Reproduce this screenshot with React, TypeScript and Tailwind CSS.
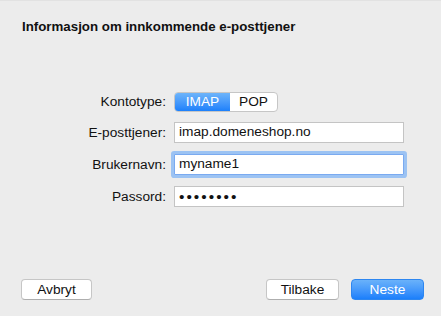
import React from "react";

const font = { fontFamily: '"Liberation Sans", Arial, Helvetica, sans-serif' };

function Row({ label, children }: { label: string; children: React.ReactNode }) {
  return (
    <div className="flex items-center">
      <div className="w-[166px] text-right text-[13.7px] text-[#111] leading-none">{label}</div>
      <div className="ml-[8px]">{children}</div>
    </div>
  );
}

function Input({ value, focused, dots }: { value: string; focused?: boolean; dots?: boolean }) {
  return (
    <div
      className={
        "w-[230px] h-[21px] bg-white border flex items-center pl-[4px] text-[#111] " +
        (dots ? "text-[15.5px] tracking-[2px] " : "text-[13.7px] ") +
        (focused
          ? "border-[#7aaaf0] rounded-[1px] shadow-[0_0_0_3px_#9cc3f3]"
          : "border-[#c4c4c4]")
      }
    >
      {value}
    </div>
  );
}

export default function App() {
  return (
    <div
      className="w-[441px] h-[316px] bg-[#ececec] border-t border-[#e2e2e2] flex flex-col"
      style={font}
    >
      <div className="pl-[22px] pt-[18px] text-[13.3px] font-bold leading-[16px] text-[#111]">
        Informasjon om innkommende e-posttjener
      </div>

      <div className="mt-[57px] flex flex-col">
        <Row label="Kontotype:">
          <div className="flex h-[20px] w-[104px] rounded-[4px] border border-[#c6c6c6] overflow-hidden bg-white text-[13.7px]">
            <div className="w-[55px] flex items-center justify-center text-white bg-gradient-to-b from-[#6db4fa] to-[#1b80fb]">
              IMAP
            </div>
            <div className="flex-1 flex items-center justify-center text-[#111]">POP</div>
          </div>
        </Row>
        <div className="mt-[10px]">
          <Row label="E-posttjener:">
            <Input value="imap.domeneshop.no" />
          </Row>
        </div>
        <div className="mt-[11px]">
          <Row label="Brukernavn:">
            <Input value="myname1" focused />
          </Row>
        </div>
        <div className="mt-[11px]">
          <Row label="Passord:">
            <Input value="••••••••" dots />
          </Row>
        </div>
      </div>

      <div className="mt-auto mb-[16px] flex items-center pl-[21px] pr-[17px]">
        <button className="w-[71px] h-[21px] bg-white border border-[#c6c6c6] border-b-[#aeaeae] rounded-[4px] text-[13.7px] text-[#111] leading-none">
          Avbryt
        </button>
        <div className="flex-1" />
        <button className="w-[73px] h-[21px] bg-white border border-[#c6c6c6] border-b-[#aeaeae] rounded-[4px] text-[13.7px] text-[#111] leading-none">
          Tilbake
        </button>
        <button className="ml-[12px] w-[73px] h-[21px] rounded-[4px] text-[13.7px] text-white leading-none bg-gradient-to-b from-[#6ab2fa] to-[#1a7ffb] border border-[#2d86f0]">
          Neste
        </button>
      </div>
    </div>
  );
}
